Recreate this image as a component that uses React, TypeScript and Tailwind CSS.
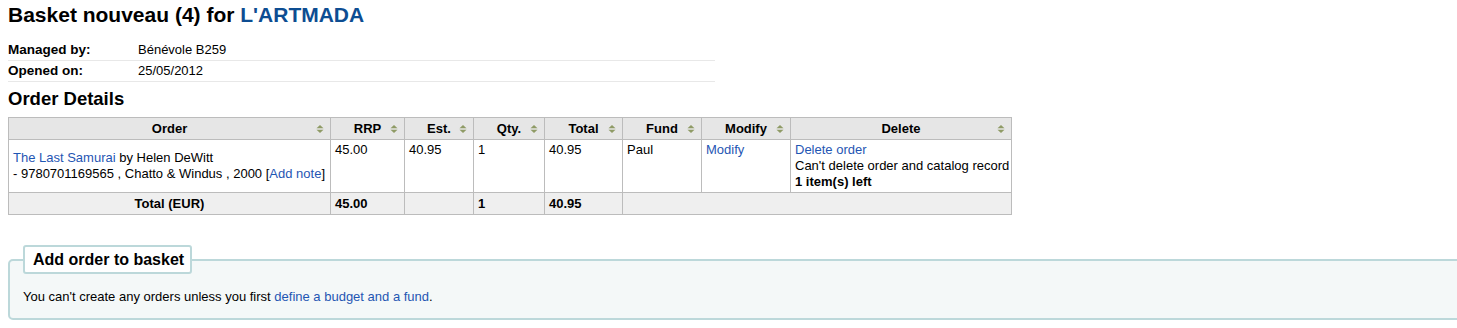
import React from "react";

const columns = [
  { label: "Order", width: "w-[322px]" },
  { label: "RRP", width: "w-[74px]" },
  { label: "Est.", width: "w-[69px]" },
  { label: "Qty.", width: "w-[71px]" },
  { label: "Total", width: "w-[78px]" },
  { label: "Fund", width: "w-[79px]" },
  { label: "Modify", width: "w-[89px]" },
  { label: "Delete", width: "w-[221px]" },
];

function SortIcon() {
  return (
    <svg width="8" height="8" viewBox="0 0 8 8" className="shrink-0">
      <polygon points="0.5,3.3 4,0 7.5,3.3" fill="#8f9b66" />
      <polygon points="0.5,4.7 7.5,4.7 4,8" fill="#8f9b66" />
    </svg>
  );
}

const cell = "border border-[#bcbcbc] px-[4px] py-[2px] align-top leading-[16px]";
const totalCell = "border border-[#bcbcbc] px-[4px] py-[3px] leading-[15px] font-bold";

export default function App() {
  return (
    <div className="w-full overflow-hidden bg-white font-['Liberation_Sans',Arial,sans-serif] text-[13px] text-black">
      <div className="px-[8px] pt-[3px] pb-[10px]">
        <h1 className="text-[21px] font-bold leading-[24px]">
          Basket nouveau (4) for{" "}
          <a className="text-[#0d4d92]" href="#">
            L'ARTMADA
          </a>
        </h1>

        <div className="mt-[13px] w-[707px]">
          <div className="flex h-[21px] items-center border-b border-[#e8e8e8]">
            <span className="w-[130px] text-[13.5px] font-bold">Managed by:</span>
            <span>Bénévole B259</span>
          </div>
          <div className="flex h-[21px] items-center border-b border-[#e8e8e8]">
            <span className="w-[130px] text-[13.5px] font-bold">Opened on:</span>
            <span>25/05/2012</span>
          </div>
        </div>

        <h2 className="mt-[7px] text-[18.5px] font-bold leading-[20px]">Order Details</h2>

        <table className="mt-[8px] w-[1004px] table-fixed border-collapse">
          <colgroup>
            {columns.map((c) => (
              <col key={c.label} className={c.width} />
            ))}
          </colgroup>
          <thead>
            <tr className="bg-[#e6e6e6]">
              {columns.map((c) => (
                <th key={c.label} className="border border-[#bcbcbc] p-0 font-bold">
                  <div className="flex h-[21px] items-center justify-between px-[6px]">
                    <span className="w-[8px]" />
                    <span>{c.label}</span>
                    <SortIcon />
                  </div>
                </th>
              ))}
            </tr>
          </thead>
          <tbody>
            <tr>
              <td className="border border-[#bcbcbc] px-[4px] py-[2px] align-middle leading-[16px]">
                <a className="text-[#1f56b3]" href="#">
                  The Last Samurai
                </a>{" "}
                by Helen DeWitt
                <br />- 9780701169565 , Chatto &amp; Windus , 2000 [
                <a className="text-[#1f56b3]" href="#">
                  Add note
                </a>
                ]
              </td>
              <td className={cell}>45.00</td>
              <td className={cell}>40.95</td>
              <td className={cell}>1</td>
              <td className={cell}>40.95</td>
              <td className={cell}>Paul</td>
              <td className={cell}>
                <a className="text-[#1f56b3]" href="#">
                  Modify
                </a>
              </td>
              <td className={`${cell} whitespace-nowrap`}>
                <a className="text-[#1f56b3]" href="#">
                  Delete order
                </a>
                <br />
                Can't delete order and catalog record
                <br />
                <b>1 item(s) left</b>
              </td>
            </tr>
            <tr className="bg-[#efefef]">
              <td className={`${totalCell} text-center`}>Total (EUR)</td>
              <td className={totalCell}>45.00</td>
              <td className={totalCell}></td>
              <td className={totalCell}>1</td>
              <td className={totalCell}>40.95</td>
              <td className={totalCell} colSpan={3}></td>
            </tr>
          </tbody>
        </table>

        <fieldset className="mt-[30px] w-[1470px] rounded-[5px] border-2 border-[#bcd8da] bg-[#f4f8f8] pr-[13px] pb-[13px] pl-[13px]">
          <legend className="rounded-[3px] border-2 border-[#bcd8da] bg-white py-[3px] pr-[6px] pl-[8px] text-[16px] font-bold leading-[19px]">
            Add order to basket
          </legend>
          <p className="mt-[15px] leading-[16px]">
            You can't create any orders unless you first{" "}
            <a className="text-[#1f56b3]" href="#">
              define a budget and a fund
            </a>
            .
          </p>
        </fieldset>
      </div>
    </div>
  );
}
